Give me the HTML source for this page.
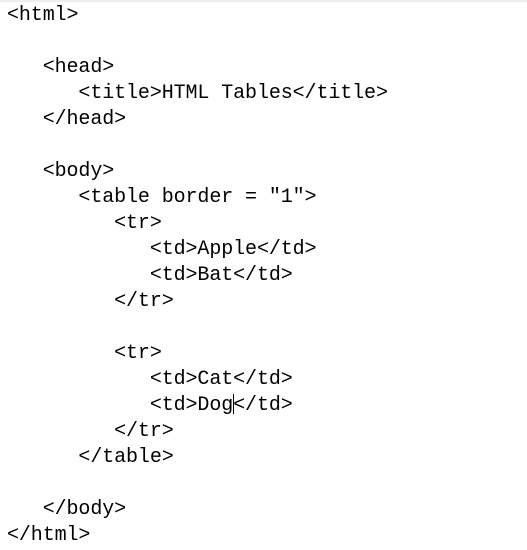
<!DOCTYPE html>
<html><head><style>
html,body{margin:0;padding:0;background:#fff;width:527px;height:550px;overflow:hidden}
body{border-top:2px solid #eee;box-sizing:border-box}
pre{margin:0;position:absolute;left:7px;top:3px;font-family:"Liberation Mono",monospace;font-size:20px;line-height:26px;color:#000;letter-spacing:-0.1px}
.cur{display:inline-block;width:1px;height:20px;background:#000;vertical-align:-4px;margin-right:-1px}
</style></head><body>
<pre>&lt;html&gt;

   &lt;head&gt;
      &lt;title&gt;HTML Tables&lt;/title&gt;
   &lt;/head&gt;

   &lt;body&gt;
      &lt;table border = "1"&gt;
         &lt;tr&gt;
            &lt;td&gt;Apple&lt;/td&gt;
            &lt;td&gt;Bat&lt;/td&gt;
         &lt;/tr&gt;

         &lt;tr&gt;
            &lt;td&gt;Cat&lt;/td&gt;
            &lt;td&gt;Dog<span class="cur"></span>&lt;/td&gt;
         &lt;/tr&gt;
      &lt;/table&gt;

   &lt;/body&gt;
&lt;/html&gt;</pre>
</body></html>
